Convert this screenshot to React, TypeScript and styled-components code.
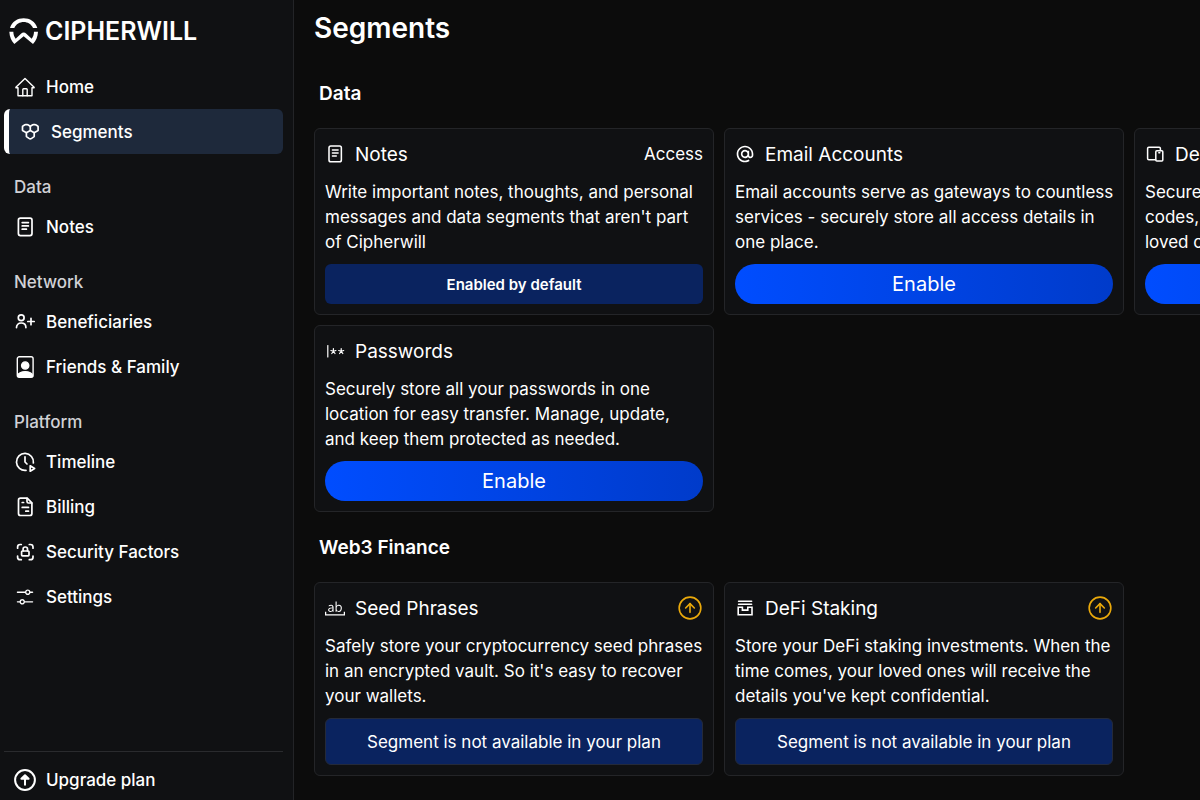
import React, { ReactNode } from "react";
import styled, { createGlobalStyle, css } from "styled-components";
import { VscSettings, VscWholeWord } from "react-icons/vsc";
import { RiAtLine } from "react-icons/ri";
import { CircleArrowUp } from "lucide-react";

const GlobalStyle = createGlobalStyle`
  *, *::before, *::after { box-sizing: border-box; }
  body {
    margin: 0;
    background: #0c0c0c;
    color: #fff;
    font-family: Inter, "Liberation Sans", sans-serif;
    font-size: 17px;
  }
  h1, h2, h3, p { margin: 0; padding: 0; }
  button { font: inherit; color: inherit; cursor: pointer; }
  a { color: inherit; text-decoration: none; }
  svg { display: block; flex: none; }
`;

/* ---------- icons ---------- */

const Glyph = styled.svg.attrs({ "aria-hidden": true })<{ $weight?: number }>`
  fill: none;
  stroke: currentColor;
  stroke-width: ${(p) => p.$weight ?? 1.6};
  stroke-linecap: round;
  stroke-linejoin: round;
`;

type IconProps = { size?: number };

const HomeIcon = ({ size = 22 }: IconProps) => (
  <Glyph width={size} height={size} viewBox="0 0 22 22" $weight={1.4}>
    <path d="M11 2.4 1.9 11.3v.5H4v7.9h14v-7.9h2.1v-.5z" />
    <path d="M8.8 19.7v-6.2q0-.8.8-.8h2.8q.8 0 .8.8v6.2" />
  </Glyph>
);

const SegmentsIcon = ({ size = 22 }: IconProps) => (
  <Glyph width={size} height={size} viewBox="0 0 22 22" $weight={1.7}>
    <path d="M11.3 5.6v3.6q0 .4-.4.6L7.8 11.400q-.4.2-.8 0L3.900 9.800q-.4-.2-.4-.6V5.600q0-.4.400-.6L6 3.800q.4-.2.800-.2h1.200q.4 0 .8.2L10.900 5q.4.2.4.600z" />
    <path d="M11.300 5.600q0-.4.400-.6l2.100-1.200q.4-.2.800-.2h1.200q.4 0 .8.2L18.700 5q.4.2.4.600v3.600q0 .4-.4.600l-3.100 1.600q-.4.200-.8 0L11.300 9.400" />
    <path d="M7.400 11.500v3.700q0 .4.400.7l2.200 1.500q1.300.8 2.600 0l2.200-1.500q.4-.3.400-.7v-3.700" />
  </Glyph>
);

const NotesIcon = ({ size = 22 }: IconProps) => (
  <Glyph width={size} height={size} viewBox="0 0 22 22" $weight={1.7}>
    <rect x="4.4" y="2.200" width="13.600" height="17.400" rx="2" />
    <path d="M8.200 6.600h6.200M8.200 9.900h6.200M8.200 13.200h4.200" />
  </Glyph>
);

const BeneficiariesIcon = ({ size = 22 }: IconProps) => (
  <Glyph width={size} height={size} viewBox="0 0 22 22" $weight={1.7}>
    <circle cx="7.200" cy="6.800" r="2.900" />
    <path d="M2.500 16.600c0-2.800 1.900-4.600 4.700-4.600s4.700 1.800 4.700 4.600M17 7.300v6.400M13.800 10.500h6.400" />
  </Glyph>
);

const FamilyIcon = ({ size = 22 }: IconProps) => (
  <Glyph width={size} height={size} viewBox="0 0 22 22" $weight={1.4}>
    <rect x="3.300" y=".8" width="15.800" height="20.400" rx="2" />
    <circle cx="11.200" cy="9.500" r="3.600" fill="currentColor" />
    <path d="M4 20.500v-1.300c0-1.900 3.200-3.400 7.200-3.400s7.200 1.500 7.200 3.400v1.300z" fill="currentColor" />
  </Glyph>
);

const TimelineIcon = ({ size = 22 }: IconProps) => (
  <Glyph width={size} height={size} viewBox="0 0 22 22" $weight={1.7}>
    <path d="M19.400 12A8.500 8.500 0 1 0 12 19.400" />
    <path d="M11 5.800v5.200l2 2" />
    <path d="M16.200 14.800v5.400l4.400-2.700z" />
  </Glyph>
);

const BillingIcon = ({ size = 22 }: IconProps) => (
  <Glyph width={size} height={size} viewBox="0 0 22 22" $weight={1.7}>
    <path d="M6.500 2.200h6.700l4.700 4.600v10.700q0 2-2 2H6.500q-2 0-2-2V4.200q0-2 2-2z" />
    <path d="M13 2.400v3.200q0 1.400 1.400 1.400h3.300M8.200 6.500h1.400M8.200 11.400h6.300M11.800 15.200h2.700" />
  </Glyph>
);

const SecurityIcon = ({ size = 22 }: IconProps) => (
  <Glyph width={size} height={size} viewBox="0 0 22 22" $weight={1.7}>
    <path d="M3.600 7.200V6q0-2.500 2.500-2.500h1.200M15.300 3.500h1.200Q19 3.500 19 6v1.200M19 15v1.200q0 2.500-2.500 2.500h-1.200M7.300 18.700H6.100q-2.500 0-2.500-2.500V15" />
    <rect x="7.600" y="10" width="7.400" height="4.800" rx=".8" />
    <path d="M9.100 9.800V8q0-2 2.200-2t2.200 2v1.800" />
  </Glyph>
);

const UpgradeIcon = ({ size = 22 }: IconProps) => (
  <Glyph width={size} height={size} viewBox="0 0 22 22" $weight={2}>
    <circle cx="11" cy="11" r="9.900" />
    <path d="M11 15.800V7M7.400 9.800 11 6.200l3.600 3.600z" fill="currentColor" />
  </Glyph>
);

const DevicesIcon = ({ size = 20 }: IconProps) => (
  <Glyph width={size} height={size} viewBox="0 0 20 20" $weight={1.5}>
    <path d="M10.600 15.700H3.800q-1.200 0-1.200-1.200v-10q0-1.200 1.200-1.200h10.400q1.200 0 1.200 1.200v2" />
    <rect x="10.800" y="6.700" width="7" height="10.300" rx="1" />
    <path d="M13.800 8.800h1" />
  </Glyph>
);

const PasswordsIcon = ({ size = 20 }: IconProps) => (
  <Glyph width={size} height={size} viewBox="0 0 20 20" $weight={1.2}>
    <path d="M2.800 4.500v11.500" />
    <path d="M8.400 10.300V7.600M8.400 10.300l2.500-.8M8.400 10.300l1.600 2.200M8.400 10.300l-1.600 2.200M8.400 10.300l-2.500-.8" />
    <path d="M16.200 10.300V7.600M16.200 10.300l2.500-.8M16.200 10.300l1.600 2.200M16.200 10.300l-1.600 2.200M16.200 10.300l-2.500-.8" />
  </Glyph>
);

const StakingIcon = ({ size = 20 }: IconProps) => (
  <Glyph width={size} height={size} viewBox="0 0 20 20" $weight={1.6}>
    <path d="M3.600 3.200h13M3.600 6.200h13" />
    <path d="M3.200 9.300h4.200v2.800h5.400V9.300h4.200v7.500H3.200z" strokeLinejoin="miter" />
  </Glyph>
);

const LogoMark = () => (
  <svg width="30" height="28" viewBox="26 50 90 84" aria-hidden="true">
    <path d="M29 83C40 44 100 44 111 83H98C88 59 52 59 42 83Z" fill="#fff" />
    <path
      d="M27 94H39C39 103 42 109 46 115L62 100C67 95 73 95 78 100L94 115C98 109 101 103 101 94H113C112 110 107 121 98 131L70 108L42 131C33 121 28 110 27 94Z"
      fill="#fff"
    />
  </svg>
);

/* ---------- sidebar ---------- */

const Layout = styled.div`
  display: flex;
  min-height: 100vh;
`;

const Sidebar = styled.aside`
  position: sticky;
  top: 0;
  display: flex;
  flex: none;
  flex-direction: column;
  width: 294px;
  height: 100vh;
  padding: 0 10px 0 4px;
  overflow: hidden;
  background: #101113;
  border-right: 1px solid #232427;
`;

const Brand = styled.a`
  display: flex;
  align-items: center;
  gap: 6px;
  height: 64px;
  padding: 0 5px 2px;
  font-size: 25px;
  font-weight: 600;
`;

const Nav = styled.nav`
  flex: 1;
`;

const NavLabel = styled.h2`
  padding: 20px 10px 4px;
  color: #d1d1d6;
  font-size: 17px;
  font-weight: 500;
  line-height: 26px;
`;

const NavLink = styled.a<{ $active?: boolean }>`
  display: flex;
  align-items: center;
  gap: 10px;
  height: 45px;
  padding: 0 10px;
  font-weight: 500;
  ${(p) =>
    p.$active &&
    css`
      background: #1e293b;
      border-left: 5px solid #fff;
      border-radius: 6px;
    `}
`;

const SidebarFooter = styled.div`
  height: 49px;
  padding-top: 5px;
  border-top: 1px solid #2a2b2e;
`;

/* ---------- content ---------- */

const Main = styled.main`
  flex: 1;
  min-width: 0;
  padding: 0 0 20px 20px;
  overflow: hidden;
`;

const PageTitle = styled.h1`
  padding: 8px 0 10px;
  font-size: 28px;
  font-weight: 600;
  line-height: 40px;
`;

const SectionTitle = styled.h2`
  padding: 21px 5px 19px;
  font-size: 19px;
  font-weight: 600;
  line-height: 30px;
`;

const CardGrid = styled.div`
  display: grid;
  grid-template-columns: repeat(3, 400px);
  gap: 10px;
`;

const Card = styled.article`
  display: flex;
  flex-direction: column;
  padding: 10px;
  background: #101113;
  border: 1px solid #242528;
  border-radius: 6px;
`;

const CardHeader = styled.header`
  display: flex;
  align-items: center;
  gap: 10px;
  height: 30px;
  margin-bottom: 11px;
`;

const CardTitle = styled.h3`
  flex: 1;
  font-size: 19px;
  font-weight: 400;
  white-space: nowrap;
`;

const UpgradeBadge = styled.span`
  color: #eaa90b;
`;

const Description = styled.p`
  margin-bottom: 9px;
  line-height: 25px;
  white-space: pre;
`;

const EnableButton = styled.button`
  height: 40px;
  border: 0;
  border-radius: 20px;
  background: linear-gradient(90deg, #004dff, #003bca);
  font-size: 20px;
`;

const StatusButton = styled.button<{ $kind: "default" | "locked" }>`
  height: ${(p) => (p.$kind === "default" ? 40 : 47)}px;
  border: ${(p) => (p.$kind === "default" ? "0" : "1px solid #242a3a")};
  border-radius: 6px;
  background: #0a235f;
  cursor: default;
  ${(p) =>
    p.$kind === "default" &&
    css`
      font-size: 15px;
      font-weight: 600;
    `}
`;

type Status = "default" | "available" | "locked";

type Segment = {
  title: string;
  icon: ReactNode;
  description: string;
  status: Status;
};

const dataSegments: Segment[] = [
  {
    title: "Notes",
    icon: <NotesIcon size={20} />,
    description:
      "Write important notes, thoughts, and personal\nmessages and data segments that aren't part\nof Cipherwill",
    status: "default",
  },
  {
    title: "Email Accounts",
    icon: <RiAtLine size={20} />,
    description:
      "Email accounts serve as gateways to countless\nservices - securely store all access details in\none place.",
    status: "available",
  },
  {
    title: "Device Locks",
    icon: <DevicesIcon />,
    description:
      "Secure your device passwords, PINs and\ncodes, so they can be passed on to your\nloved ones when needed.",
    status: "available",
  },
  {
    title: "Passwords",
    icon: <PasswordsIcon />,
    description:
      "Securely store all your passwords in one\nlocation for easy transfer. Manage, update,\nand keep them protected as needed.",
    status: "available",
  },
];

const financeSegments: Segment[] = [
  {
    title: "Seed Phrases",
    icon: <VscWholeWord size={20} />,
    description:
      "Safely store your cryptocurrency seed phrases\nin an encrypted vault. So it's easy to recover\nyour wallets.",
    status: "locked",
  },
  {
    title: "DeFi Staking",
    icon: <StakingIcon />,
    description:
      "Store your DeFi staking investments. When the\ntime comes, your loved ones will receive the\ndetails you've kept confidential.",
    status: "locked",
  },
];

function SegmentCard({ title, icon, description, status }: Segment) {
  return (
    <Card>
      <CardHeader>
        {icon}
        <CardTitle>{title}</CardTitle>
        {status === "default" && <a href="#notes">Access</a>}
        {status === "locked" && (
          <UpgradeBadge>
            <CircleArrowUp size={26} strokeWidth={1.5} />
          </UpgradeBadge>
        )}
      </CardHeader>
      <Description>{description}</Description>
      {status === "default" && (
        <StatusButton type="button" $kind="default">Enabled by default</StatusButton>
      )}
      {status === "available" && <EnableButton type="button">Enable</EnableButton>}
      {status === "locked" && (
        <StatusButton type="button" $kind="locked">Segment is not available in your plan</StatusButton>
      )}
    </Card>
  );
}

type NavItem = { label: string; icon: ReactNode; active?: boolean };

const navGroups: { label?: string; items: NavItem[] }[] = [
  {
    items: [
      { label: "Home", icon: <HomeIcon /> },
      { label: "Segments", icon: <SegmentsIcon />, active: true },
    ],
  },
  { label: "Data", items: [{ label: "Notes", icon: <NotesIcon /> }] },
  {
    label: "Network",
    items: [
      { label: "Beneficiaries", icon: <BeneficiariesIcon /> },
      { label: "Friends & Family", icon: <FamilyIcon /> },
    ],
  },
  {
    label: "Platform",
    items: [
      { label: "Timeline", icon: <TimelineIcon /> },
      { label: "Billing", icon: <BillingIcon /> },
      { label: "Security Factors", icon: <SecurityIcon /> },
      { label: "Settings", icon: <VscSettings size={22} /> },
    ],
  },
];

export default function App() {
  return (
    <>
      <GlobalStyle />
      <Layout>
        <Sidebar>
          <Brand href="#home">
            <LogoMark />
            CIPHERWILL
          </Brand>
          <Nav>
            {navGroups.map((group) => (
              <section key={group.label ?? "main"}>
                {group.label && <NavLabel>{group.label}</NavLabel>}
                {group.items.map((item) => (
                  <NavLink
                    key={item.label}
                    href="#"
                    $active={item.active}
                    aria-current={item.active ? "page" : undefined}
                  >
                    {item.icon}
                    {item.label}
                  </NavLink>
                ))}
              </section>
            ))}
          </Nav>
          <SidebarFooter>
            <NavLink href="#upgrade">
              <UpgradeIcon />
              Upgrade plan
            </NavLink>
          </SidebarFooter>
        </Sidebar>
        <Main>
          <PageTitle>Segments</PageTitle>
          <SectionTitle>Data</SectionTitle>
          <CardGrid>
            {dataSegments.map((s) => (
              <SegmentCard key={s.title} {...s} />
            ))}
          </CardGrid>
          <SectionTitle>Web3 Finance</SectionTitle>
          <CardGrid>
            {financeSegments.map((s) => (
              <SegmentCard key={s.title} {...s} />
            ))}
          </CardGrid>
        </Main>
      </Layout>
    </>
  );
}
